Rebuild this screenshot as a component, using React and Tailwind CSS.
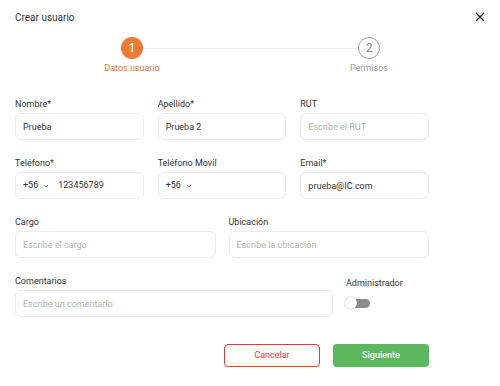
import { useState } from 'react';

const font = { fontFamily: 'Roboto, "Noto Sans", sans-serif' };

function Field({ label, placeholder, value, className = '' }) {
  return (
    <div className={className}>
      <label className="block text-[9px] leading-[12px] text-[#333]">{label}</label>
      <input
        type="text"
        placeholder={placeholder}
        defaultValue={value}
        className="mt-[3px] w-full h-[27px] border border-[#ebebeb] rounded-[6px] px-[7px] text-[9px] text-[#333] placeholder:text-[#b3b3b3] outline-none"
      />
    </div>
  );
}

function PhoneField({ label, value, className = '' }) {
  return (
    <div className={className}>
      <label className="block text-[9px] leading-[12px] text-[#333]">{label}</label>
      <div className="mt-[3px] w-full h-[27px] border border-[#ebebeb] rounded-[6px] pl-[7px] flex items-center text-[9px] text-[#333]">
        <span>+56</span>
        <svg width="6" height="4" viewBox="0 0 6 4" className="ml-[5px] mt-px">
          <path d="M1 1l2 2 2-2" stroke="#888" strokeWidth="0.8" fill="none" />
        </svg>
        <input
          type="text"
          defaultValue={value}
          className="ml-[9px] flex-1 min-w-0 bg-transparent outline-none"
        />
      </div>
    </div>
  );
}

export default function App() {
  const [admin, setAdmin] = useState(false);

  return (
    <div className="w-[500px] h-[386px] bg-white px-[15px] overflow-hidden" style={font}>
      {/* header */}
      <div className="h-[34px] flex items-center justify-between">
        <h1 className="text-[10px] text-[#333]">Crear usuario</h1>
        <button className="w-[10px] h-[10px]">
          <svg width="10" height="10" viewBox="0 0 10 10">
            <path d="M1 1l8 8M9 1l-8 8" stroke="#222" strokeWidth="1.4" />
          </svg>
        </button>
      </div>

      {/* stepper */}
      <div className="flex items-start mt-[3px] ml-[77px] w-[317px]">
        <div className="w-[80px] flex flex-col items-center relative z-10">
          <div className="w-[22px] h-[22px] rounded-full bg-[#ef7a33] text-white text-[12px] font-medium flex items-center justify-center">
            1
          </div>
          <span className="mt-[3px] text-[9px] leading-[12px] text-[#ef7a33]">Datos usuario</span>
        </div>
        <div className="flex-1 h-px bg-[#eeeeee] mt-[11px] mx-[-29px]" />
        <div className="w-[80px] flex flex-col items-center relative z-10">
          <div className="w-[22px] h-[22px] rounded-full border-[1.5px] border-[#a5a5a5] bg-white text-[#888] text-[12px] flex items-center justify-center">
            2
          </div>
          <span className="mt-[3px] text-[9px] leading-[12px] text-[#999]">Permisos</span>
        </div>
      </div>

      {/* form */}
      <div className="w-[414px] mt-[24px] flex flex-col gap-[17px]">
        <div className="grid grid-cols-3 gap-x-[14px]">
          <Field label="Nombre*" value="Prueba" />
          <Field label="Apellido*" value="Prueba 2" />
          <Field label="RUT" placeholder="Escribe el RUT" />
        </div>
        <div className="grid grid-cols-3 gap-x-[14px]">
          <PhoneField label="Teléfono*" value="123456789" />
          <PhoneField label="Teléfono Movil" value="" />
          <Field label="Email*" value="prueba@IC.com" />
        </div>
        <div className="grid grid-cols-2 gap-x-[13px]">
          <Field label="Cargo" placeholder="Escribe el cargo" />
          <Field label="Ubicación" placeholder="Escribe la ubicación" />
        </div>
        <div className="flex gap-x-[13px]">
          <Field label="Comentarios" placeholder="Escribe un comentario" className="w-[318px]" />
          <div className="flex-1">
            <label className="block text-[9px] leading-[12px] text-[#333] mt-[2px]">Administrador</label>
            <button
              onClick={() => setAdmin((v) => !v)}
              className="mt-[8px] relative w-[24px] h-[12px] flex items-center"
            >
              <span className={`ml-[3px] w-[21px] h-[9px] rounded-full ${admin ? 'bg-[#5cb85c]' : 'bg-[#8c8c8c]'}`} />
              <span
                className={`absolute top-0 w-[12px] h-[12px] rounded-full bg-white shadow-[0_0_2px_rgba(0,0,0,0.35)] ${admin ? 'left-[12px]' : 'left-[-1px]'}`}
              />
            </button>
          </div>
        </div>
      </div>

      {/* actions */}
      <div className="w-[414px] mt-[27px] flex justify-end gap-[13px]">
        <button className="w-[96px] h-[23px] border-[1.5px] border-[#e03c3c] rounded-[4px] text-[9px] text-[#e03c3c]">
          Cancelar
        </button>
        <button className="w-[96px] h-[23px] bg-[#5cb85c] rounded-[4px] text-[9px] text-white font-medium">
          Siguiente
        </button>
      </div>
    </div>
  );
}
